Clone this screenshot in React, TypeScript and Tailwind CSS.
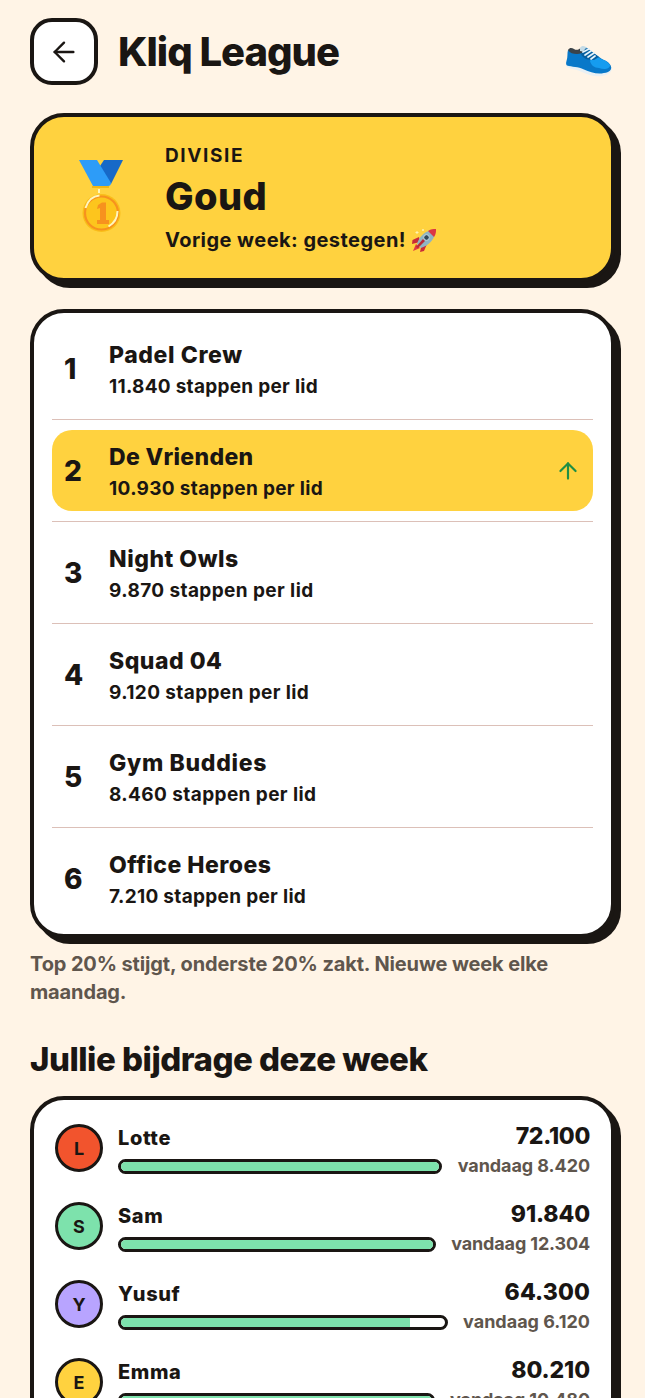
import { ArrowLeft, ArrowUp } from 'lucide-react'

const teams = [
  { name: 'Padel Crew', steps: '11.840', nameTracking: 'tracking-[0.6px]', tracking: 'tracking-[0.28px]' },
  { name: 'De Vrienden', steps: '10.930', up: true, nameTracking: 'tracking-[0.32px]', tracking: 'tracking-[0.34px]' },
  { name: 'Night Owls', steps: '9.870', nameTracking: 'tracking-[0.52px]', tracking: 'tracking-[0.4px]' },
  { name: 'Squad 04', steps: '9.120', nameTracking: 'tracking-[0.5px]', tracking: 'tracking-[0.39px]' },
  { name: 'Gym Buddies', steps: '8.460', nameTracking: 'tracking-[0.68px]', tracking: 'tracking-[0.4px]' },
  { name: 'Office Heroes', steps: '7.210', nameTracking: 'tracking-[0.48px]', tracking: 'tracking-[0.31px]' },
]

const members = [
  { name: 'Lotte', total: '72.100', today: '8.420', color: 'bg-[#f2542d]', width: 'w-[133px]', progress: 100, tracking: 'tracking-[-0.07px]', totalTracking: 'tracking-[-0.3px]' },
  { name: 'Sam', total: '91.840', today: '12.304', color: 'bg-[#7de2ac]', width: 'w-[139px]', progress: 100, tracking: 'tracking-[-0.15px]', totalTracking: 'tracking-[-0.1px]' },
  { name: 'Yusuf', total: '64.300', today: '6.120', color: 'bg-[#b8a4ff]', width: 'w-[127px]', progress: 89.2, tracking: 'tracking-[0px]', totalTracking: 'tracking-[0.1px]' },
  { name: 'Emma', total: '80.210', today: '10.480', color: 'bg-[#ffd23f]', width: 'w-[140px]', progress: 100, tracking: 'tracking-[-0.12px]', totalTracking: 'tracking-[-0.1px]' },
]

const ShoeIcon = () => (
  <svg viewBox="0 0 48 34" className="h-[34px] w-12">
    <path d="M2 17c-1.500 4-1.500 6 1 7.500 4 2 9 2 14 4.500 7 3.500 14 5 20 4 6-1 10-4 10-8z" fill="#e9f0f4" />
    <path d="M3 7C2 10 3 14 1.500 18c-.7 2-.5 4 .5 4.500 5 1.500 11 1 17 4 7 3.500 16 5.500 24 2.500 3-1.500 4-3.500 2.700-6.500-2-4-6-5-9.500-7L22 5c-3-2-5 0-6 2-4 3-9 1-13 0z" fill="#0878c9" />
    <path d="M25 18c3-5 7-5 11-2 4 1 7 3 9 6 0 4-6 5-11 3-5 0-8-3-9-7z" fill="#159cf0" />
    <path d="M3 7c2-3 4-2 6-1 3 2 5 0 7-1 2-1 4 0 4 2-2 3-5 4-8 4-4 0-7-1-9-4z" fill="#3b4349" />
    <path d="M15 5c2-3 5-2 7 0l-2 4-5-1z" fill="#c5dbe6" />
    <path d="M16 11c2 5 7 6 13 6l5-3-13-9z" fill="#075f9f" />
    <path d="M18 9l6-3M20 12l6-4M23 14l6-4M26 16l4-3" stroke="#e5f3fb" strokeWidth="1.700" strokeLinecap="round" />
  </svg>
)

const MedalIcon = () => (
  <svg viewBox="0 0 48 76" className="h-[76px] w-12">
    <path d="M23 6 27 0h19L34 24H22z" fill="#1769c8" />
    <path d="M2 0h18l14 23c0 2-1 3-3 3H16z" fill="#2d9cf8" />
    <path d="M15 26h17v2H15z" fill="#efb718" />
    <circle cx="24.500" cy="53" r="19" fill="#f9bd19" />
    <circle cx="24.500" cy="53" r="16.500" fill="#fdc51d" stroke="#f7921e" strokeWidth="2.200" />
    <path d="M22 29v4M8.500 48C11 40 16 36 22.500 35.500M40.500 51c0 7-3 12-9 15.500" fill="none" stroke="#fff6bd" strokeWidth="2" />
    <path d="M21 45l4-2.500h4V60h3v4H20v-4h3V48l-3 1z" fill="#f7921e" />
  </svg>
)

const RocketIcon = () => (
  <svg viewBox="0 0 26 26" className="ml-[5px] h-[26px] w-[26px]">
    <path d="M8 10 1.500 13 1 17l8-2zM16 17l-3 7-4 1 2-9z" fill="#c92b38" />
    <path d="M5 17 2 24l7-3z" fill="#e23b40" />
    <path d="M6 17C8 10 13 5 20 3l4 3c-1 7-6 12-14 15z" fill="#8fb4c3" />
    <path d="M17 4c3-2 5-2 8-2 0 3 0 5-2 8z" fill="#db3644" />
    <path d="M12 12 5 20l2 1 7-7z" fill="#b92836" />
    <circle cx="15.500" cy="10.500" r="2.800" fill="#34495a" stroke="#c9dce4" strokeWidth="1" />
    <path d="M6 4v3M4.500 5.500h3M12 2v2M11 3h2" stroke="#fff3b0" strokeWidth="1" />
  </svg>
)

const card = 'rounded-[34px] border-4 border-[#1a1613] shadow-[6px_6px_0_#1a1613]'

export default function App() {
  return (
    <div className="h-[1398px] w-full overflow-hidden bg-[#fff4e6] px-[30px] pt-[18px] font-['Inter',sans-serif] font-bold text-[#1a1613]">
      {/* Header */}
      <header className="flex h-[67px] items-center">
        <button className="flex h-[67px] w-[68px] items-center justify-center rounded-[22px] border-4 border-[#1a1613] bg-white">
          <ArrowLeft className="h-8 w-8" strokeWidth={1.8} />
        </button>
        <h1 className="ml-5 whitespace-nowrap text-[40px] leading-[48px] font-extrabold tracking-[-1px]">Kliq League</h1>
        <div className="mt-4 mr-0.5 ml-auto">
          <ShoeIcon />
        </div>
      </header>

      {/* Division */}
      <section className={`mt-7 flex h-[169px] items-center bg-[#ffd23f] pl-[43px] ${card}`}>
        <MedalIcon />
        <div className="ml-10 whitespace-nowrap">
          <p className="text-[19px] leading-7 tracking-[1.6px]">DIVISIE</p>
          <p className="mt-0.5 text-[38px] leading-[48px] font-extrabold tracking-[0.4px]">Goud</p>
          <p className="mt-1.5 flex items-center text-[20px] leading-7 tracking-[0.45px]">
            <span>Vorige week: gestegen!</span>
            <RocketIcon />
          </p>
        </div>
      </section>

      {/* Ranking */}
      <section className={`mt-[27px] h-[629px] bg-white px-[18px] pt-[5px] ${card}`}>
        {teams.map((team, i) => (
          <div key={team.name} className={`h-[102px] pt-[10px] ${i < teams.length - 1 ? 'border-b border-[#dcc0b8]' : ''}`}>
            <div className={`flex h-[81px] items-center rounded-[20px] px-3 ${team.up ? 'bg-[#ffd23f]' : ''}`}>
              <span className="w-[45px] text-[28px] font-extrabold">{i + 1}</span>
              <div className="flex-1 pt-[3px] whitespace-nowrap">
                <p className={`text-[23px] leading-8 font-extrabold ${team.nameTracking}`}>{team.name}</p>
                <p className={`text-[19px] leading-[31px] ${team.tracking}`}>{team.steps} stappen per lid</p>
              </div>
              {team.up && <ArrowUp className="h-[26px] w-[26px] text-[#1f8f45]" />}
            </div>
          </div>
        ))}
      </section>

      <p className="mt-3 text-[20px] leading-[28px] tracking-[-0.13px] text-[#5f564d]">
        Top 20% stijgt, onderste 20% zakt. Nieuwe week elke
        <br />
        maandag.
      </p>

      {/* Contributions */}
      <h2 className="mt-[31px] whitespace-nowrap text-[33px] leading-[44px] font-extrabold tracking-[-0.5px]">Jullie bijdrage deze week</h2>
      <section className={`mt-[15px] h-[400px] bg-white px-[21px] pt-[18px] ${card}`}>
        {members.map((member) => (
          <div key={member.name} className="mb-[18px] flex h-[60px] items-center">
            <div className={`flex h-12 w-12 items-center justify-center rounded-full border-[3px] border-[#1a1613] text-[18px] ${member.color}`}>
              {member.name[0]}
            </div>
            <div className="mr-[15px] ml-[15px] flex-1">
              <p className="pt-px text-[20px] leading-7 font-extrabold tracking-[0.6px]">{member.name}</p>
              <div className="mt-[7px] h-[15px] overflow-hidden rounded-full border-[3px] border-[#1a1613]">
                <div className="h-full bg-[#7de2ac]" style={{ width: `${member.progress}%` }} />
              </div>
            </div>
            <div className={`flex flex-col items-end pt-[3px] whitespace-nowrap ${member.width}`}>
              <span className={`text-[23px] leading-8 font-extrabold ${member.totalTracking}`}>{member.total}</span>
              <span className={`text-[18px] leading-7 text-[#5f564d] ${member.tracking}`}>vandaag {member.today}</span>
            </div>
          </div>
        ))}
      </section>
    </div>
  )
}
